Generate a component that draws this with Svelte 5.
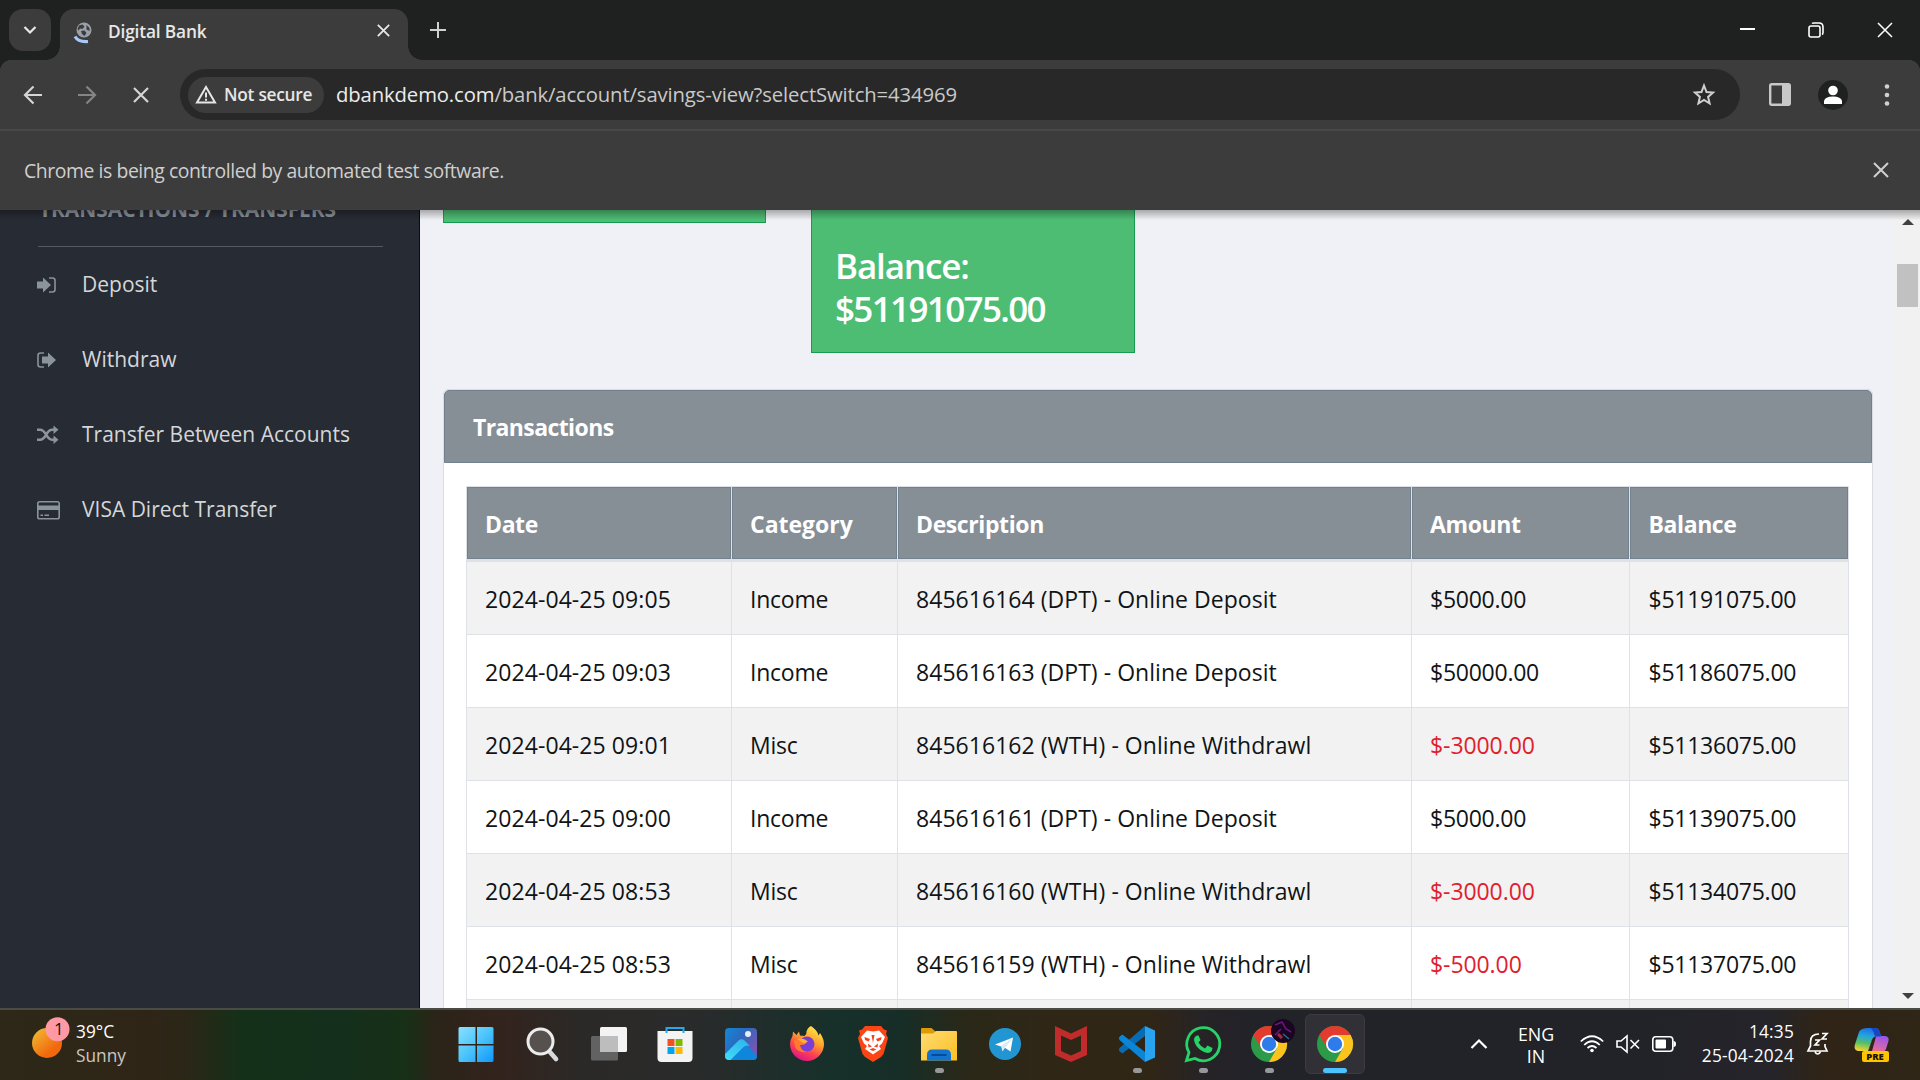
<script>
  const menu = [
    { icon: 'in', label: 'Deposit' },
    { icon: 'out', label: 'Withdraw' },
    { icon: 'random', label: 'Transfer Between Accounts' },
    { icon: 'card', label: 'VISA Direct Transfer' }
  ];
  const rows = [
    ['2024-04-25 09:05', 'Income', '845616164 (DPT) - Online Deposit', '$5000.00', '$51191075.00'],
    ['2024-04-25 09:03', 'Income', '845616163 (DPT) - Online Deposit', '$50000.00', '$51186075.00'],
    ['2024-04-25 09:01', 'Misc', '845616162 (WTH) - Online Withdrawl', '$-3000.00', '$51136075.00'],
    ['2024-04-25 09:00', 'Income', '845616161 (DPT) - Online Deposit', '$5000.00', '$51139075.00'],
    ['2024-04-25 08:53', 'Misc', '845616160 (WTH) - Online Withdrawl', '$-3000.00', '$51134075.00'],
    ['2024-04-25 08:53', 'Misc', '845616159 (WTH) - Online Withdrawl', '$-500.00', '$51137075.00'],
    ['', '', '', '', '']
  ];
  const apps = [
    { id: 'start' }, { id: 'search' }, { id: 'taskview' }, { id: 'store' }, { id: 'photos' },
    { id: 'firefox' }, { id: 'brave' }, { id: 'explorer', open: true }, { id: 'telegram' },
    { id: 'mcafee' }, { id: 'vscode', open: true }, { id: 'whatsapp', open: true },
    { id: 'chrome', open: true, avatar: true }, { id: 'chrome', active: true }
  ];
</script>

{#snippet cross(size, width)}
  <svg width={size} height={size} viewBox="0 0 16 16" fill="none" stroke="currentColor" stroke-width={width}><path d="M1 1 15 15M15 1 1 15" /></svg>
{/snippet}

{#snippet chrome()}
  <circle cx="18" cy="18" r="18" fill="#2c9b49" />
  <path d="M33.600 9A18 18 0 0 1 18 36L25.800 22.500 18 9Z" fill="#fcc31e" />
  <path d="M2.400 9A18 18 0 0 1 33.600 9H18L10.200 22.500Z" fill="#e33b2e" />
  <circle cx="18" cy="18" r="9" fill="#fff" />
  <circle cx="18" cy="18" r="7.200" fill="#2f7bea" />
{/snippet}

<div class="screen">
  <header class="tabs">
    <button class="tabsearch" aria-label="Search tabs">
      <svg width="14" height="10" viewBox="0 0 14 10" fill="none" stroke="#e8e8e8" stroke-width="2.2"><path d="M1.500 2 7 7.500 12.500 2" /></svg>
    </button>
    <div class="tab">
      <svg class="favicon" width="18" height="22" viewBox="0 0 18 22">
        <circle cx="10" cy="8" r="7.500" fill="#9aa0a9" />
        <path d="M5 3.500 8.500 2.500 10.500 4.500 8.500 7 6 6.500 4.500 8.500 3.500 7ZM7 9 10.500 8.500 12.500 11 10.500 14 8 12ZM12.500 3 15.500 6V9L12.500 7.500Z" fill="#3c3c3c" />
        <path d="M1 14.500C3 18 8 20 14 19.500" fill="none" stroke="#a8c7fa" stroke-width="3.200" />
      </svg>
      <span class="tabtitle">Digital Bank</span>
      <span class="tabclose">{@render cross(13, 2.2)}</span>
    </div>
    <svg class="plus" width="16" height="16" viewBox="0 0 16 16" stroke="#d0d0d0" stroke-width="2"><path d="M8 0V16M0 8H16" /></svg>
    <div class="winctl">
      <svg width="16" height="16" viewBox="0 0 16 16"><path d="M1 7H16" stroke="#fff" stroke-width="2" /></svg>
      <svg width="16" height="16" viewBox="0 0 16 16" fill="none" stroke="#fff" stroke-width="1.600"><rect x="1" y="4" width="11" height="11" rx="2" /><path d="M4 1.500Q4.500 1 6 1H11Q15 1 15 5V10.500Q15 12 14 12.500" /></svg>
      <span>{@render cross(16, 1.5)}</span>
    </div>
  </header>

  <div class="toolbar">
    <svg class="nav" width="20" height="20" viewBox="0 0 20 20" fill="none" stroke="#d5d5d5" stroke-width="2.200"><path d="M19 10H3M10.500 1.500 2 10l8.500 8.500" /></svg>
    <svg class="nav" width="20" height="20" viewBox="0 0 20 20" fill="none" stroke="#858585" stroke-width="2.200"><path d="M0 10H16M8.500 1.500 17 10l-8.500 8.500" /></svg>
    <span class="nav stop">{@render cross(16, 2.2)}</span>
    <div class="omnibox">
      <div class="chip">
        <svg width="22" height="19" viewBox="0 0 22 19"><path d="M11 2 20 17.500H2Z" fill="none" stroke="#e6e6e6" stroke-width="2" /><path d="M11 7.500v5M11 13.700v2" stroke="#e6e6e6" stroke-width="2" /></svg>
        <span>Not secure</span>
      </div>
      <span class="url"><b>dbankdemo.com</b>/bank/account/savings-view?selectSwitch=434969</span>
      <svg class="star" width="24" height="24" viewBox="0 0 24 24" fill="none" stroke="#d0d0d0" stroke-width="2"><path d="m12 2.500 2.500 6.500 6.500.6-4.900 4.300L17.600 20.500 12 17 6.400 20.500 7.900 13.900 3 9.600 9.500 9Z" /></svg>
    </div>
    <svg class="panel" width="22" height="23" viewBox="0 0 22 23"><rect x="1.200" y="1.200" width="19.600" height="20.600" rx="1.500" fill="none" stroke="#c8c8c8" stroke-width="2.400" /><path d="M13 1H21V22H13Z" fill="#c8c8c8" /></svg>
    <svg class="profile" width="30" height="30" viewBox="0 0 30 30"><circle cx="15" cy="15" r="15" fill="#1f2020" /><circle cx="15" cy="10.500" r="4.800" fill="#fff" /><path d="M6 24V21Q7 16.500 15 16.500T24 21V24Z" fill="#fff" /></svg>
    <svg class="dots" width="6" height="24" viewBox="0 0 6 24" fill="#d0d0d0"><circle cx="3" cy="3.500" r="2.300" /><circle cx="3" cy="12" r="2.300" /><circle cx="3" cy="20.500" r="2.300" /></svg>
  </div>

  <div class="infobar">
    <span>Chrome is being controlled by automated test software.</span>
    <i>{@render cross(16, 2.1)}</i>
  </div>

  <div class="page">
    <aside>
      <h2>TRANSACTIONS / TRANSFERS</h2>
      <nav>
        {#each menu as m}
          <a href="#{m.icon}">
            <svg width="24" height="20" viewBox="0 0 24 20" fill="#8b939b">
              {#if m.icon === 'in'}
                <path d="M0 6.500H6V2.500L14 10 6 17.500V13.500H0Z" /><path d="M12 3H15.500Q18 3 18 5.500V14.500Q18 17 15.500 17H12" fill="none" stroke="#8b939b" stroke-width="1.600" />
              {:else if m.icon === 'out'}
                <path d="M5 6.500H11V2.500L19 10 11 17.500V13.500H5Z" /><path d="M7 3H3.500Q1 3 1 5.500V14.500Q1 17 3.500 17H7" fill="none" stroke="#8b939b" stroke-width="1.600" />
              {:else if m.icon === 'random'}
                <path d="M0 4.800H3C9.500 4.800 9 14.700 15 14.700H17M0 14.700H3C9.500 14.700 9 4.800 15 4.800H17" fill="none" stroke="#8b939b" stroke-width="2.600" /><path d="M16.500.5 21.500 4.800 16.500 9ZM16.500 10.500 21.500 14.700 16.500 19Z" />
              {:else}
                <rect x=".8" y="1.800" width="21.400" height="17" rx="1.800" fill="none" stroke="#8b939b" stroke-width="1.600" /><path d="M1 5.500H22V10H1ZM3.500 14.500H6V16H3.500ZM7.500 14.500H12V16H7.500Z" />
              {/if}
            </svg>
            <span>{m.label}</span>
          </a>
        {/each}
      </nav>
    </aside>

    <main>
      <div class="tiles">
        <div class="tile short"></div>
        <div class="tile"><p>Balance:</p><p class="sum">$51191075.00</p></div>
      </div>
      <section class="card">
        <h3>Transactions</h3>
        <table>
          <colgroup><col class="c1" /><col class="c2" /><col class="c3" /><col class="c4" /><col class="c5" /></colgroup>
          <thead>
            <tr><th>Date</th><th class="category">Category</th><th>Description</th><th>Amount</th><th>Balance</th></tr>
          </thead>
          <tbody>
            {#each rows as r}
              <tr>
                {#each r as cell}<td class:neg={cell.startsWith('$-')}>{cell}</td>{/each}
              </tr>
            {/each}
          </tbody>
        </table>
      </section>
    </main>

    <div class="scrollbar">
      <svg width="12" height="6" viewBox="0 0 12 6"><path d="M0 6 6 0 12 6Z" fill="#404040" /></svg>
      <div class="thumb"></div>
      <svg class="down" width="12" height="6" viewBox="0 0 12 6"><path d="M0 0 6 6 12 0Z" fill="#404040" /></svg>
    </div>
    <div class="shade"></div>
  </div>

  <footer>
    <div class="weather">
      <svg width="40" height="44" viewBox="0 0 40 44">
        <defs><linearGradient id="sun" x1=".1" y1=".1" x2=".8" y2=".9"><stop offset="0" stop-color="#f0b530" /><stop offset=".8" stop-color="#f2690d" /></linearGradient></defs>
        <circle cx="15" cy="28" r="15" fill="url(#sun)" /><circle cx="25.500" cy="14.200" r="12" fill="#ff99a4" />
        <text x="22" y="20" class="badge">1</text>
      </svg>
      <div><p>39°C</p><p class="dim">Sunny</p></div>
    </div>

    <div class="apps">
      {#each apps as a}
        <div class="app" class:active={a.active}>
          <svg width="36" height="36" viewBox="0 0 36 36">
            {#if a.id === 'start'}
              <defs><linearGradient id="win" gradientUnits="userSpaceOnUse" x1="0" y1="0" x2="35" y2="36"><stop offset="0" stop-color="#8be1ff" /><stop offset=".5" stop-color="#4cc4fb" /><stop offset="1" stop-color="#0f97fb" /></linearGradient></defs>
              <path d="M-.5 2.500Q-.5 1 1 1H16.500V18H-.5ZM18 1H33Q34.500 1 34.500 2.500V18H18ZM-.5 19.500H16.500V36H1Q-.5 36-.5 34.500ZM18 19.500H34.500V34.500Q34.500 36 33 36H18Z" fill="url(#win)" />
            {:else if a.id === 'search'}
              <path d="M24 25 31 33" stroke="#d6dade" stroke-width="4.600" stroke-linecap="round" /><circle cx="15.500" cy="15.500" r="12.500" fill="#56514e" stroke="#ececec" stroke-width="3" />
            {:else if a.id === 'taskview'}
              <rect x="0" y="10" width="27" height="24.500" rx="1.500" fill="#626262" /><rect x="9" y="1" width="27" height="25" rx="1.500" fill="#f3f3f3" /><path d="M9 10H27V26H10.500Q9 26 9 24.500Z" fill="#bdbdbd" />
            {:else if a.id === 'store'}
              <path d="M.5 5H35.500V32Q35.500 36 31.500 36H4.500Q.5 36 .5 32Z" fill="#f3f3f3" /><path d="M9.500 7V2H26.500V7" fill="none" stroke="#24a9ec" stroke-width="2" /><path d="M10.500 13H17.500V20H10.500Z" fill="#f25022" /><path d="M18.500 13H25.500V20H18.500Z" fill="#7fba00" /><path d="M10.500 21H17.500V28H10.500Z" fill="#00a4ef" /><path d="M18.500 21H25.500V28H18.500Z" fill="#ffb900" />
            {:else if a.id === 'photos'}
              <defs><linearGradient id="ph" x1="0" y1="0" x2="1" y2=".6"><stop offset="0" stop-color="#1487d8" /><stop offset=".5" stop-color="#2b69bd" /><stop offset="1" stop-color="#7a55b0" /></linearGradient><linearGradient id="mt" x1=".6" y1="0" x2="0" y2="1"><stop offset="0" stop-color="#2fb9ee" /><stop offset="1" stop-color="#41dcf8" /></linearGradient></defs>
              <rect x="2" y="2" width="32" height="32" rx="4" fill="url(#ph)" /><path d="M7 34 20 21 24 19 34 29.500V30Q34 34 30 34Z" fill="#0f86dc" /><path d="M2 30V28L15.500 14.500Q18.500 12 21.500 14.500L27 20Q23 18.500 20 21.500L7.500 34H6Q2 34 2 30Z" fill="url(#mt)" /><circle cx="25" cy="8" r="3" fill="#e6eef8" />
            {:else if a.id === 'firefox'}
              <defs><linearGradient id="fx" x1=".8" y1="0" x2=".3" y2="1"><stop offset="0" stop-color="#fff04a" /><stop offset=".4" stop-color="#ffa22c" /><stop offset=".7" stop-color="#ff4150" /><stop offset="1" stop-color="#d9138c" /></linearGradient></defs>
              <path d="M22 0C26 3 29 6 29.500 9.500L31 7Q35 13 35 18A17 17 0 0 1 1 18Q1 14 3.500 10L4 5.500 7.500 9 10 5.500 11 9.500 15.500 10Q18 8 17.500 5.500 18.500 1.500 22 0Z" fill="url(#fx)" /><circle cx="18" cy="18" r="7.500" fill="#7a3ed8" /><path d="M5 14Q12 14 18 16.500 15 19.500 11 19 12 25 18 26 9 27 6 21Z" fill="#ff7a2c" /><path d="M8 13Q14 11 19 15.500L15 17.500Z" fill="#ffb02e" />
            {:else if a.id === 'brave'}
              <path d="M10 0H26L29 3.500 32 4.500 31 8 33 12 28.500 28 26 31 18 36 10 31 7.500 28 3 12 5 8 4 4.500 7 3.500Z" fill="#fb4515" /><path d="M18 5.500 24 4.500 30 11 27 17.500 24 20 26 23 20 27 18 28.500 16 27 10 23 12 20 9 17.500 6 11 12 4.500Z" fill="#fff" /><path d="M9.500 11 15 13 13.500 15.500 10 14ZM26.500 11 21 13 22.500 15.500 26 14ZM16.500 9 18 17 19.500 9ZM13 17.500 17 20.500 13.500 21.500ZM23 17.500 19 20.500 22.500 21.500ZM14.500 23.500 18 22 21.500 23.500 18 25Z" fill="#f6421c" />
            {:else if a.id === 'explorer'}
              <defs><linearGradient id="fo" x1="0" y1="0" x2="1" y2="1"><stop offset="0" stop-color="#ffdb74" /><stop offset="1" stop-color="#fcbf20" /></linearGradient></defs>
              <path d="M0 3Q0 2 1 2H10.500L15 6V10H0Z" fill="#dd9a05" /><path d="M0 7.500H12L15 5H35Q36 5 36 6V34.500H0Z" fill="url(#fo)" /><path d="M6 34.500V29Q6 23.500 11 23.500H25Q30 23.500 30 29V34.500Z" fill="#1273d0" /><path d="M10.500 29H25.500" stroke="#06468f" stroke-width="1.800" />
            {:else if a.id === 'telegram'}
              <circle cx="18" cy="18" r="16" fill="#2296d3" /><path d="M8 18.500 26 11.500 23.500 25.500 17.500 21.500 23 14.500 14 20.500Z" fill="#fff" /><path d="M14 20 25 13 18 22 15.500 25.500Z" fill="#dcecf6" />
            {:else if a.id === 'mcafee'}
              <path d="M2 0 18 7.500 34 0V29L18 36 2 29Z" fill="#bf2c2b" /><path d="M8 9.500 18 14 28 9.500V25L18 29.500 8 25Z" fill="#2f2616" />
            {:else if a.id === 'vscode'}
              <path d="M.5 22 26 0V10L4 27Q3 27.500 2 26.500L.3 25Q-.5 23.500.5 22Z" fill="#086cb4" /><path d="M.5 14 26 36V26L4 9Q3 8.500 2 9.500L.3 11Q-.5 12.500.5 14Z" fill="#0b86d6" /><path d="M26 0 36 4.500V31.500L26 36Z" fill="#27a3f0" />
            {:else if a.id === 'whatsapp'}
              <path d="M1.500 34.500 4 26.500A16.500 16.500 0 1 1 10 32.500Z" fill="none" stroke="#25d366" stroke-width="2.800" /><path d="M12 9.500Q9 10.500 9 14 10 20 15.500 24 21 28 25 26.500 27.500 25 27.500 22L22.500 19.500 20 22.500Q15.500 20.500 13.500 16.500L15.500 14 13.500 9.500Z" fill="#25d366" />
            {:else}
              {@render chrome()}
              {#if a.avatar}
                <circle cx="32" cy="5" r="12" fill="#1a0620" /><path d="M24-1 31-4 35 3 40 6M24 9 30 3" fill="none" stroke="#6a1580" stroke-width="1.600" /><path d="M27 8 31 12" stroke="#a02c3c" stroke-width="3" /><path d="M32 8 38 13" stroke="#1f6f8c" stroke-width="1.600" />
              {/if}
            {/if}
          </svg>
          {#if a.open || a.active}<i></i>{/if}
        </div>
      {/each}
    </div>

    <div class="tray">
      <svg class="chev" width="18" height="12" viewBox="0 0 18 12" fill="none" stroke="#fff" stroke-width="2.200"><path d="M1.500 10 9 2.500 16.500 10" /></svg>
      <div class="lang"><p>ENG</p><p>IN</p></div>
      <svg class="wifi" width="24" height="18" viewBox="0 0 24 18" fill="none" stroke="#fff" stroke-width="1.700"><path d="M.8 6.500Q12-4 23.200 6.500M4.200 10Q12 2.500 19.800 10M7.500 13Q12 9 16.500 13" /><circle cx="12" cy="15.500" r="1.800" fill="#fff" stroke="none" /></svg>
      <svg class="vol" width="24" height="20" viewBox="0 0 24 20" fill="none" stroke="#fff" stroke-width="1.600"><path d="M1 7H5L11 2V18L5 13H1ZM14.500 6 23 14.500M23 6 14.500 14.500" /></svg>
      <svg class="bat" width="24" height="16" viewBox="0 0 24 16"><rect x=".8" y=".8" width="20" height="14.400" rx="3" fill="none" stroke="#fff" stroke-width="1.600" /><rect x="3.500" y="3.500" width="10.500" height="9" rx="1" fill="#fff" /><path d="M21.500 5Q24 5 24 8T21.500 11Z" fill="#fff" /></svg>
      <div class="clock"><p>14:35</p><p>25-04-2024</p></div>
      <svg class="bell" width="22" height="24" viewBox="0 0 22 24" fill="none" stroke="#fff" stroke-width="1.700"><path d="M12 2Q3.500 2 3.500 9.500V14L1 19H20L18 14.500V12M8 20Q10.500 24 13.500 20M8 8H12.500L8 13H12.500M15 1.500H20L15 7H20" /></svg>
      <svg class="pre" width="36" height="36" viewBox="0 0 36 36">
        <defs><linearGradient id="cp" x1=".5" y1="0" x2=".3" y2="1"><stop offset="0" stop-color="#1d6fe6" /><stop offset=".35" stop-color="#22a6de" /><stop offset=".65" stop-color="#55bd6a" /><stop offset="1" stop-color="#f4d52c" /></linearGradient><linearGradient id="cq" x1=".7" y1="0" x2=".3" y2="1"><stop offset="0" stop-color="#9a55ec" /><stop offset="1" stop-color="#f2708a" /></linearGradient></defs>
        <path d="M19 9H31Q35.500 9.500 34.500 14L32 22Q30.500 25.500 27 25.500H14Z" fill="url(#cq)" /><path d="M14 1H22Q25 1.500 26 6L27 9H23Q19 9 17.500 14L14 24H4Q-.5 23 .8 18L5 5Q7 1 14 1Z" fill="url(#cp)" /><path d="M17 1H22Q25 1.500 26 6L27 9.500H21Q19.500 4 17 1Z" fill="#1747c4" /><path d="M18 13Q19 9.500 22 9.500L18 24H14.500Z" fill="#2f2616" />
        <rect x="8" y="24" width="27" height="11" rx="2" fill="#ffc600" /><text x="12.200" y="32.800" class="pretext">PRE</text>
      </svg>
    </div>
  </footer>
</div>

<style>
  :global(body) { margin: 0; overflow: hidden; background: #f0f1f6; }
  .screen { width: 1920px; height: 1080px; overflow: hidden; display: flex; flex-direction: column; font-family: "Open Sans", "Noto Sans", sans-serif; }
  .screen *, .screen *::before, .screen *::after { box-sizing: border-box; }
  p, h2, h3 { margin: 0; }
  svg { display: block; flex: none; overflow: visible; }
  span { white-space: nowrap; }

  .tabs { height: 60px; flex: none; display: flex; background: #1f2120; padding-left: 9px; }
  .tabsearch { width: 42px; height: 42px; margin: 9px 9px 0 0; padding: 0; border: 0; border-radius: 14px; background: #3c3c3c; display: flex; align-items: center; justify-content: center; }
  .tab { position: relative; width: 348px; height: 51px; margin-top: 9px; background: #3c3c3c; border-radius: 14px 14px 0 0; display: flex; align-items: center; padding: 0 18px 9px 14px; color: #e8e8e8; }
  .tab::before, .tab::after { content: ""; position: absolute; bottom: 0; width: 14px; height: 14px; }
  .tab::before { left: -14px; background: radial-gradient(circle at 0 0, transparent 13.5px, #3c3c3c 14px); }
  .tab::after { right: -14px; background: radial-gradient(circle at 100% 0, transparent 13.5px, #3c3c3c 14px); }
  .favicon { margin-top: 5px; }
  .tabtitle { margin: 0 auto 0 16px; font-size: 17.300px; font-weight: 600; letter-spacing: -.15px; padding-top: 2px; }
  .tabclose { display: flex; }
  .plus { margin: 22px 0 0 22px; }
  .winctl { margin-left: auto; padding: 22px 27px 0 0; display: flex; gap: 53px; color: #fff; }

  .toolbar { height: 69px; flex: none; display: flex; align-items: center; padding-left: 23px; background: radial-gradient(circle at 12px 12px, #3c3c3c 12px, #1f2120 12.500px) 0 0 / 12px 12px no-repeat, radial-gradient(circle at 0 12px, #3c3c3c 12px, #1f2120 12.500px) 100% 0 / 12px 12px no-repeat, #3c3c3c; }
  .nav { margin-right: 35px; }
  .stop { margin: 0 31px 0 0; display: flex; color: #d5d5d5; }
  .omnibox { width: 1560px; height: 51px; border-radius: 26px; background: #282828; display: flex; align-items: center; padding-left: 8px; }
  .chip { width: 136px; height: 36px; border-radius: 18px; background: #3c3c3c; display: flex; align-items: center; padding-left: 7px; gap: 7px; font-size: 17.300px; font-weight: 600; color: #e6e6e6; letter-spacing: -.25px; }
  .url { margin-left: 12px; padding-bottom: 2px; font-size: 20.300px; color: #c9c9c9; letter-spacing: -.12px; }
  .url b { font-weight: 400; color: #ececec; }
  .star { margin: 0 24px 0 auto; }
  .panel { margin-left: 29px; }
  .profile { margin-left: 27px; }
  .dots { margin-left: 36px; }

  .infobar { height: 81px; flex: none; border-top: 2px solid #474a49; background: #3c3c3c; display: flex; align-items: center; justify-content: space-between; padding: 0 31px 2px 24px; font-size: 19.400px; letter-spacing: -.43px; color: #cfcfcf; }
  .infobar span { padding-top: 2px; }
  .infobar i { display: flex; }

  .page { position: relative; height: 798px; flex: none; display: flex; overflow: hidden; background: #f0f1f6; }
  .shade { position: absolute; inset: 0 0 auto 0; height: 10px; background: linear-gradient(rgba(0, 0, 0, .3), rgba(0, 0, 0, 0)); }

  aside { width: 420px; flex: none; background: #272b33; border-right: 1px solid #0a0a10; }
  h2 { display: flow-root; height: 37px; margin: 0 36px 0 38px; padding-left: 1px; border-bottom: 1px solid #555a60; color: #8a929b; font-size: 21px; font-weight: 700; line-height: 0; letter-spacing: -.080px; white-space: nowrap; }
  h2::before { content: ""; display: block; margin-top: -1px; }
  nav a { height: 75px; display: flex; align-items: center; padding-left: 37px; color: #d4d6d9; text-decoration: none; font-size: 21px; }
  nav a svg { margin-right: 21px; }
  nav a span { padding-bottom: 1px; }

  main { width: 1474px; flex: none; padding-left: 23px; overflow: hidden; }
  .tiles { height: 143px; display: flex; gap: 45px; align-items: flex-start; }
  .tile { width: 324px; height: 143px; background: #4dbd74; border: 1px solid #169c52; border-top: 0; padding: 34px 23px; color: #fff; font-size: 35px; font-weight: 600; line-height: 43px; letter-spacing: -1.150px; }
  .tile.short { width: 323px; height: 13px; padding: 0; }
  .tile .sum { letter-spacing: -1.650px; }
  .card { width: 1430px; height: 700px; margin-top: 36px; border: 1px solid #d9dde2; border-radius: 5px; background: #fff; }
  h3 { height: 73px; background: #868e96; border: 1px solid #73818f; border-radius: 5px 5px 0 0; padding-left: 28px; font-size: 23px; line-height: 72px; font-weight: 700; color: #fff; letter-spacing: -.6px; }
  table { width: 1383px; margin: 23px 0 0 22px; border-spacing: 0; table-layout: fixed; border: solid #dee2e6; border-width: 1px 1px 0 0; }
  .c1 { width: 265px; } .c2 { width: 166px; } .c3 { width: 514px; } .c4 { width: 218px; } .c5 { width: 219px; }
  th, td { padding: 0 0 0 18px; text-align: left; border-left: 1px solid #dee2e6; white-space: nowrap; font-size: 23px; }
  th { height: 75px; border-bottom: 3px solid #dee2e6; background: #868e96; box-shadow: inset 0 0 0 1px #73818f; color: #fff; font-weight: 700; padding-top: 1px; letter-spacing: -.4px; }
  .category { letter-spacing: 0; }
  td { height: 73px; border-top: 1px solid #dee2e6; color: #101416; letter-spacing: -.25px; padding-top: 1px; }
  td:nth-child(1) { letter-spacing: .080px; }
  td:nth-child(3) { letter-spacing: .040px; }
  td.neg { letter-spacing: -.080px; }
  tbody tr:first-child td { height: 72px; border-top: 0; }
  tbody tr:nth-child(odd) { background: #f2f2f2; }
  td.neg { color: #e0202e; }
  th:last-child, td:last-child { padding-left: 18.500px; }

  .scrollbar { flex: 1; background: #f1f1f1; display: flex; flex-direction: column; align-items: center; padding: 9px 0 9px 1px; }
  .thumb { width: 21px; height: 43px; margin-top: 39px; background: #c1c1c1; }
  .down { margin-top: auto; }

  footer { height: 72px; flex: none; border-top: 2px solid #4a4a46; display: flex; color: #fff; font-size: 17.300px; line-height: 24px; background: linear-gradient(90deg, #2d2818 0, #2f2517 150px, #2a2717 190px, #153018 240px, #142f1c 340px, #173017 405px, #2b2418 435px, #33231d 500px, #2b2927 580px, #292b2b 700px, #17302a 830px, #162e27 900px, #2a2818 965px, #302616 1060px, #302616 1150px, #272326 1200px, #222229 1250px, #222229 1650px, #25242a 1770px, #2f2417 1820px, #2f2616 1920px); }
  .weather { width: 447px; display: flex; padding: 5px 0 0 32px; }
  .weather div { margin-left: 4px; padding-top: 5px; }
  .dim { color: #c9c7c3; }
  .badge { font-size: 17px; fill: #1a1212; }
  .apps { display: flex; gap: 6px; padding-top: 4px; }
  .app { width: 60px; height: 60px; padding-top: 12px; border-radius: 6px; display: flex; flex-direction: column; align-items: center; }
  .app svg { height: 36px; }
  .app i { width: 9px; height: 5px; margin-top: 6px; border-radius: 3px; background: #97989a; }
  .app.active { background: #303036; border: 1px solid #3b3b40; padding-top: 11px; }
  .app.active i { width: 24px; background: #4cc2ff; }
  .tray { margin-left: auto; display: flex; align-items: center; padding: 0 30px 2px 0; }
  .lang { width: 60px; margin: 0 14px 0 18px; text-align: center; line-height: 22px; padding-top: 1px; font-size: 17.800px; }
  .vol { margin-left: 12px; }
  .bat { margin-left: 12px; }
  .clock { width: 118px; text-align: right; letter-spacing: .200px; }
  .bell { margin-left: 13px; }
  .pre { margin: 2px 0 0 25px; }
  .pretext { font-size: 9.500px; font-weight: 800; fill: #1c1605; }
</style>
